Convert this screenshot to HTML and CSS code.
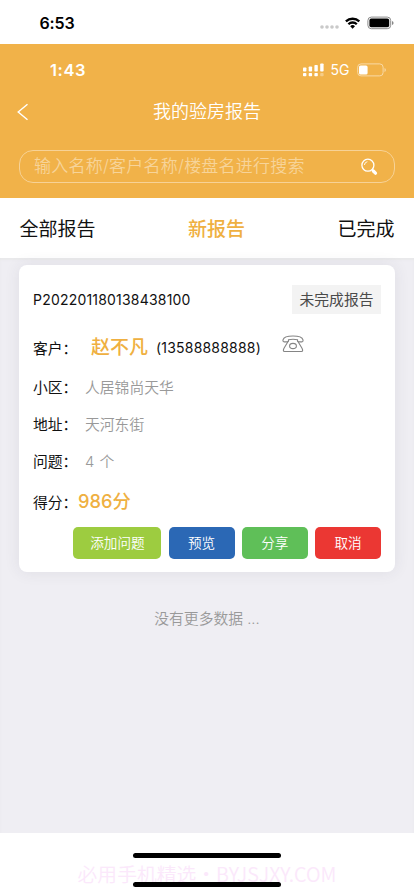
FILE: index.html
```html
<!DOCTYPE html>
<html lang="zh-CN">
<head>
<meta charset="utf-8">
<meta name="viewport" content="width=device-width, initial-scale=1">
<title>我的验房报告</title>
<link rel="stylesheet" href="styles.css">
</head>
<body>
<div class="device-status">
  <span class="device-time">6:53</span>
  <svg class="device-icons" width="76" height="16" viewBox="0 0 76 16">
    <g fill="#c9c9c9"><circle cx="3" cy="11" r="1.8"/><circle cx="8" cy="11" r="1.8"/><circle cx="13" cy="11" r="1.8"/><circle cx="18" cy="11" r="1.8"/></g>
    <g fill="none" stroke="#000" stroke-width="2.3"><path d="M26.9 5.4a9.8 9.8 0 0 1 13.4 0"/><path d="M29.4 8.2a6 6 0 0 1 8.4 0"/></g>
    <path d="M31.2 10.2a3.5 3.5 0 0 1 4.8 0l-2.4 2.6z"/>
    <rect x="48.9" y="1.1" width="22.8" height="11.6" rx="3.4" fill="none" stroke="#8b8b8b" stroke-width="1"/>
    <rect x="50.4" y="2.6" width="19.8" height="8.6" rx="1.8"/>
    <path d="M73 5v4q1.6-.6 1.6-2t-1.6-2z" fill="#888"/>
  </svg>
</div>
<header class="header">
  <div class="app-status">
    <span class="app-time">1:43</span>
    <svg width="22" height="14" viewBox="0 0 22 14" fill="#fff">
      <rect x="0" y="4.5" width="3.4" height="4" rx=".8"/><rect x="5.7" y="3.5" width="3.4" height="5" rx=".8"/><rect x="11.4" y="2" width="3.4" height="6.5" rx=".8"/><rect x="17.2" y=".5" width="3.4" height="8" rx=".8"/>
      <rect x="0" y="10" width="3.4" height="3.2" rx=".8"/><rect x="5.7" y="10" width="3.4" height="3.2" rx=".8"/><rect x="11.4" y="10" width="3.4" height="3.2" rx=".8"/><rect x="17.2" y="10" width="3.4" height="3.2" rx=".8" opacity=".35"/>
    </svg>
    <span class="network">5G</span>
    <svg width="30" height="14" viewBox="0 0 30 14">
      <rect x=".7" y=".9" width="25.4" height="12" rx="3.3" fill="none" stroke="#f8d9a6"/>
      <rect x="2" y="2.5" width="8.6" height="9" rx="1.6" fill="#fff"/>
      <path d="M27.5 5v4q1.4-.6 1.4-2t-1.4-2z" fill="#f8d9a6"/>
    </svg>
  </div>
  <div class="nav">
    <svg class="back" width="12" height="18" viewBox="0 0 12 18" fill="none" stroke="#fff" stroke-width="1.4"><path d="M10.5 1.2 1.2 9l9.3 7.8"/></svg>
    <h1 class="title">我的验房报告</h1>
  </div>
  <div class="search">
    <span class="placeholder">输入名称/客户名称/楼盘名进行搜索</span>
    <svg width="17" height="18" viewBox="0 0 17 18" fill="none" stroke="#fff"><circle cx="6.9" cy="7.2" r="6" stroke-width="1.3"/><path d="M3.4 7a3.7 3.7 0 0 1 3-3.3" stroke-width=".9"/><path d="m11.4 11.8 1.2 1.2" stroke-width="1.5"/><path d="m12.3 13 2.2 2.2" stroke-width="3.2" stroke-linecap="round"/></svg>
  </div>
</header>
<nav class="tabs">
  <span>全部报告</span><span class="active">新报告</span><span>已完成</span>
</nav>
<main class="content">
  <article class="card">
    <div class="card-head"><span class="report-id">P202201180138438100</span><span class="badge">未完成报告</span></div>
    <div class="row customer">
      <span class="label">客户：</span><strong class="name">赵不凡</strong><span class="phone">(13588888888)</span>
      <svg class="tel" width="22" height="18" viewBox="0 0 22 18" fill="none" stroke="#858585" stroke-width="1.1"><path d="M1 4.8C1.7 2.2 5.3 1 11 1s9.3 1.2 10 3.8q.3 2-1.1 2.1h-3q-1.3 0-1.4-1.2V4.8Q11 3.7 6.5 4.8v.9q-.1 1.2-1.4 1.2h-3Q.7 6.8 1 4.8z"/><path d="M6.5 5.8 2 13.3q-1.5 3.2.5 3.2h17q2 0 .5-3.2l-4.5-7.5"/><ellipse cx="11" cy="11" rx="3.4" ry="2.6"/></svg>
    </div>
    <div class="row"><span class="label">小区：</span><span class="value">人居锦尚天华</span></div>
    <div class="row"><span class="label">地址：</span><span class="value">天河东街</span></div>
    <div class="row"><span class="label">问题：</span><span class="value count">4 个</span></div>
    <div class="row score-row"><span class="label">得分：</span><strong class="score">986分</strong></div>
    <div class="actions">
      <button class="btn add">添加问题</button><button class="btn preview">预览</button><button class="btn share">分享</button><button class="btn cancel">取消</button>
    </div>
  </article>
  <p class="empty">没有更多数据 ...</p>
</main>
<footer class="footer">
  <div class="home-bar"></div>
  <div class="watermark">必用手机精选・BYJSJXY.COM</div>
  <div class="home-bar"></div>
</footer>
</body>
</html>
```
FILE: styles.css
```css
* { box-sizing: border-box; }
body {
  margin: 0;
  width: 414px;
  height: 896px;
  overflow: hidden;
  display: flex;
  flex-direction: column;
  background: #fff;
  color: #111;
  font-family: Inter, "Noto Sans CJK SC", sans-serif;
  white-space: nowrap;
}
svg { display: block; flex: none; }
.device-status {
  height: 44px;
  flex: none;
  display: flex;
  justify-content: space-between;
  align-items: flex-start;
  padding: 13px 19px 0 39.5px;
}
.device-time { font-size: 16px; line-height: 20px; font-weight: 600; letter-spacing: -.15px; color: #000; }
.device-icons { margin-top: 3px; margin-right: .5px; }
.header { height: 154px; flex: none; background: #f1b249; color: #fff; padding: 16px 19px 0; }
.app-status { display: flex; align-items: center; height: 20px; padding: 0 8.5px 0 31px; }
.app-time { font-size: 16.5px; line-height: 18px; font-weight: 600; margin: 0 auto 1px 0; letter-spacing: .6px; }
.network { font-size: 14px; line-height: 18px; font-weight: 400; margin: 0 7px 1px 6px; }
.nav { display: flex; align-items: center; height: 26px; margin-top: 18px; }
.back { margin: 2px 0 0 -2px; }
.title { margin: 2px 0 0 124px; font-size: 18px; line-height: 26px; font-weight: 350; }
.search {
  height: 33px;
  margin-top: 26px;
  border: 1px solid #f7d296;
  border-radius: 14px;
  display: flex;
  align-items: center;
  justify-content: space-between;
  padding: 0 16px 0 14px;
}
.placeholder { color: #f7d499; font-size: 17px; line-height: 25px; font-weight: 350; letter-spacing: .23px; }
.tabs {
  height: 60px;
  flex: none;
  display: flex;
  align-items: center;
  justify-content: space-between;
  padding: 0 19.5px 2px;
  font-size: 19px;
}
.active { color: #efb041; font-weight: 500; }
.content { height: 575px; flex: none; background: #efeef3; padding: 7px 19px 0; box-shadow: inset 0 2px 2px #e8e8ea; }
.card {
  height: 307px;
  background: #fff;
  border-radius: 8px;
  padding: 20px 14px 0;
  box-shadow: 0 0 16px rgba(60, 60, 75, .09);
}
.card-head { height: 29px; display: flex; align-items: center; justify-content: space-between; }
.report-id { font-size: 14px; letter-spacing: .2px; }
.badge { width: 89px; height: 29px; background: #f3f3f3; color: #4a4a4a; font-size: 14.8px; line-height: 30px; text-align: center; }
.row { height: 37px; display: flex; align-items: center; font-size: 14.8px; }
.label { width: 52px; flex: none; }
.value { color: #999; font-size: 14.8px; font-weight: 350; }
.count { word-spacing: 1px; }
.customer { height: 39px; margin-top: 14px; margin-bottom: 1px; }
.name { color: #efb041; font-size: 19px; line-height: 28px; font-weight: 500; margin: 0 0 0 6px; }
.phone { font-size: 14px; letter-spacing: .2px; margin-left: 8px; }
.tel { margin: -7px 0 0 21.5px; }
.score-row { height: 45px; }
.score { color: #efb041; font-size: 18.3px; line-height: 26px; font-weight: 500; margin: -2px 0 0 -7px; }
.actions { display: flex; justify-content: flex-end; gap: 7.2px; margin-top: 3px; }
.btn { width: 66px; height: 32px; border: 0; border-radius: 5px; padding: 0 0 2px; color: #fff; font: 350 13.6px Inter, "Noto Sans CJK SC", sans-serif; }
.add { width: 88px; background: #9dcc40; }
.preview { background: #2b68b5; }
.share { background: #5fbf58; }
.cancel { background: #eb3733; }
.empty { margin: 36px 0 0; text-align: center; color: #999; font-size: 14.8px; line-height: 22px; font-weight: 350; }
.footer { height: 63px; display: flex; flex-direction: column; align-items: center; padding-top: 20px; }
.home-bar { width: 148px; height: 5px; flex: none; border-radius: 3px; background: #000; }
.watermark { height: 24px; flex: none; color: #fbe8fb; font-size: 19.8px; line-height: 32px; font-family: "Noto Sans CJK SC", sans-serif; font-weight: 350; }
```
